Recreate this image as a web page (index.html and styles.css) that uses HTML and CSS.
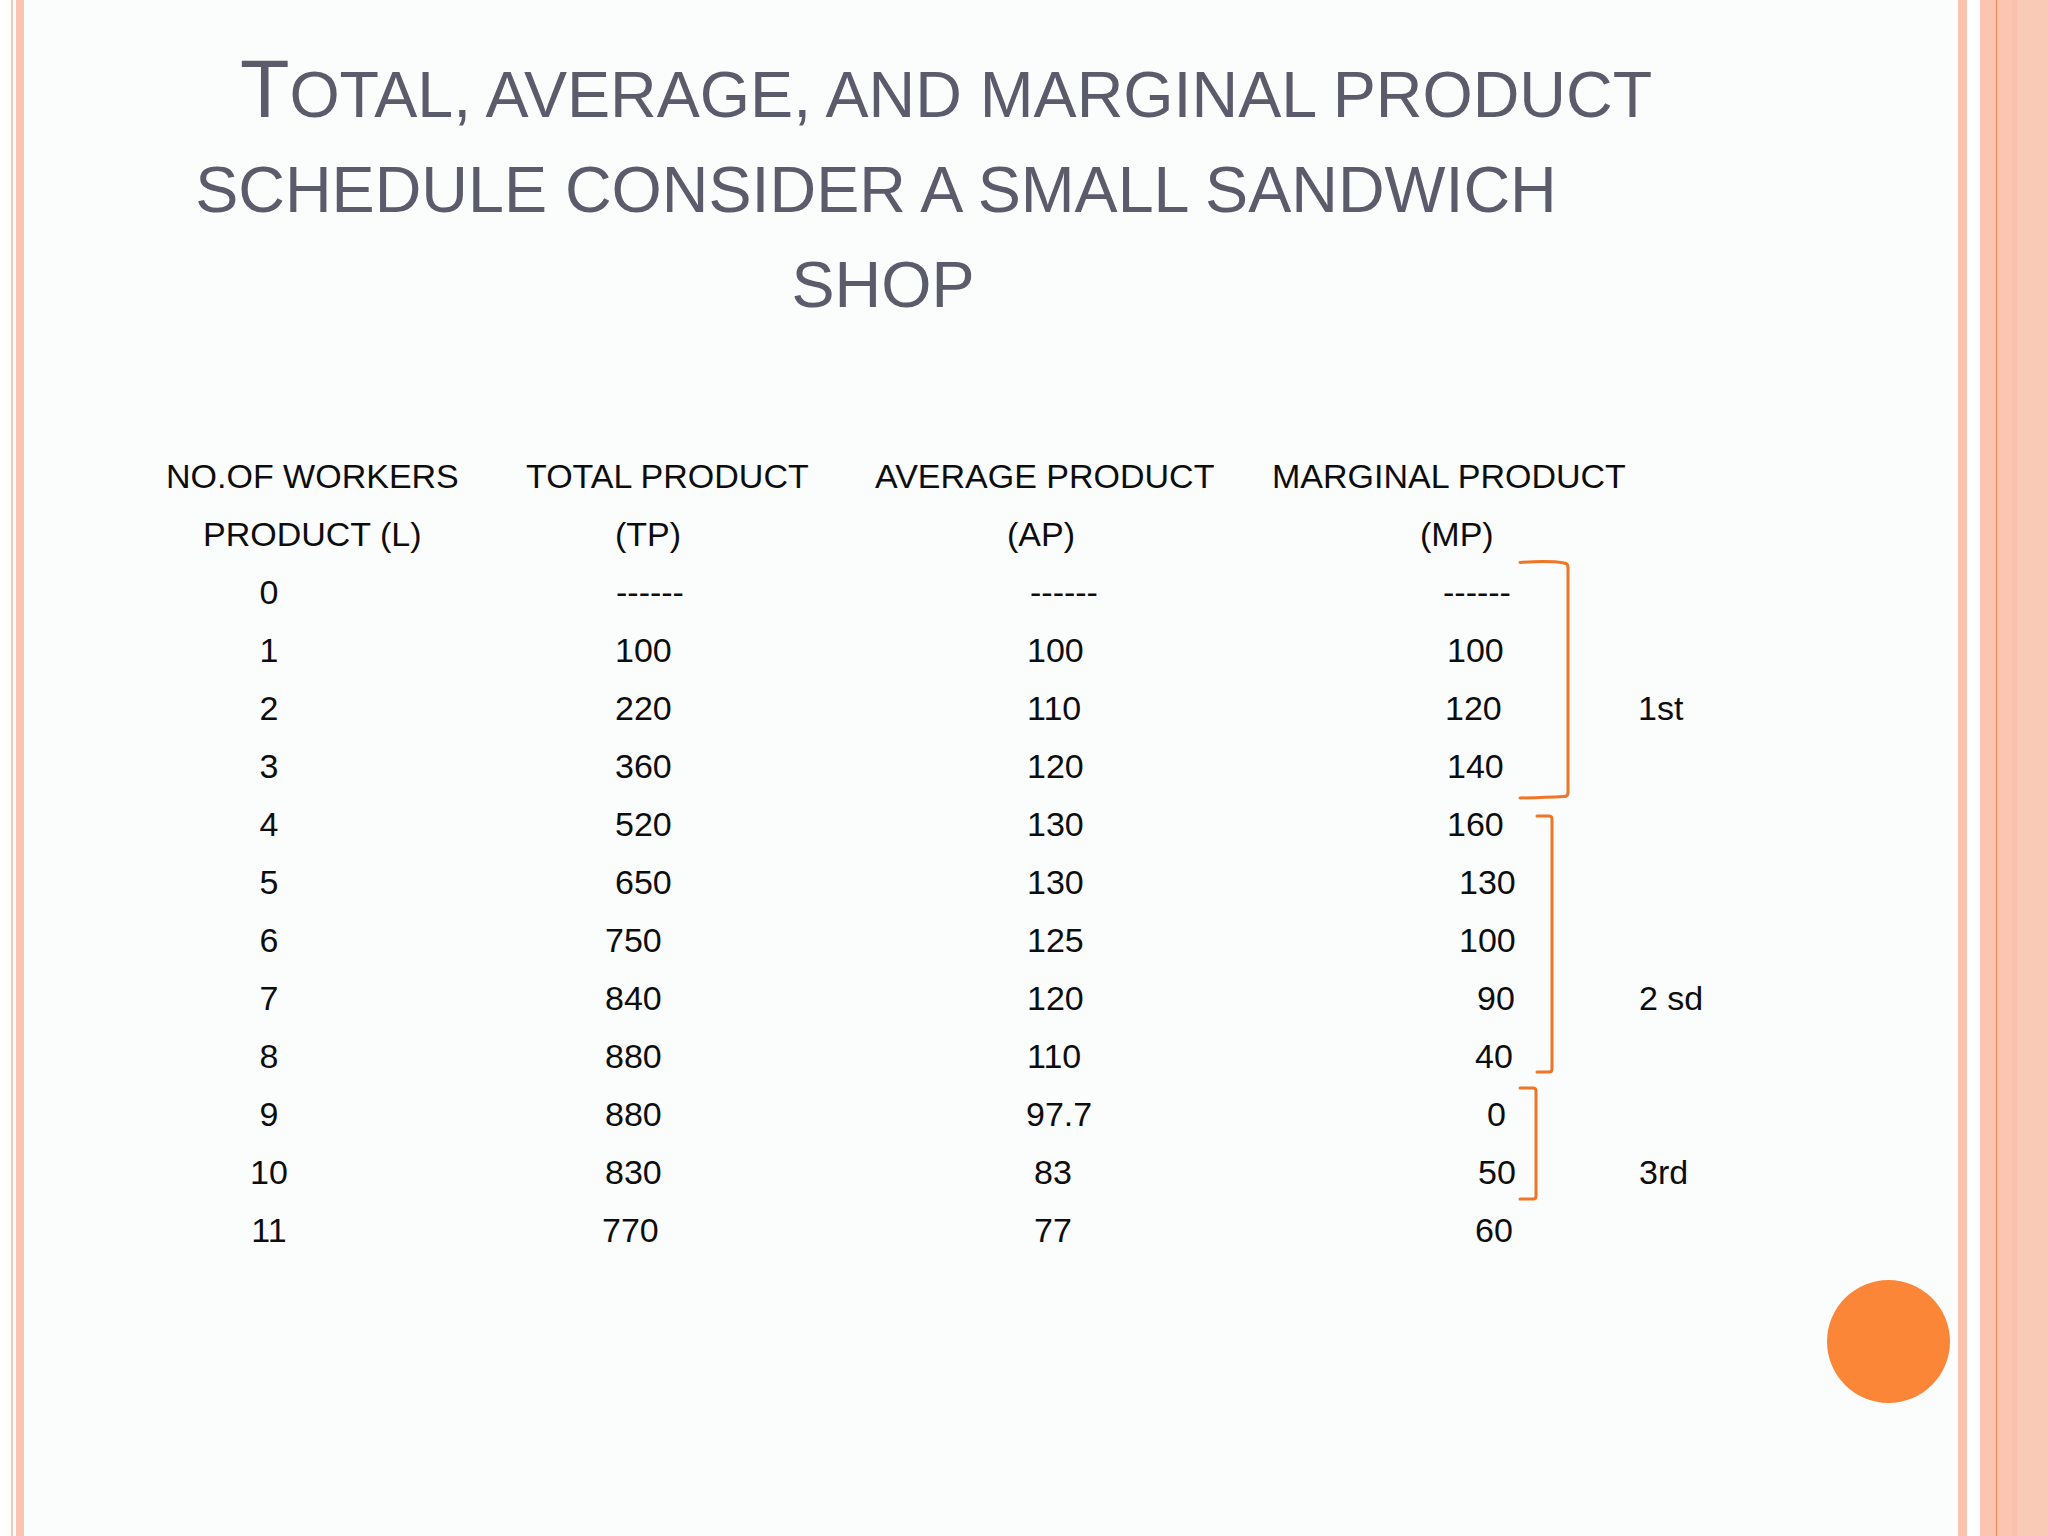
FILE: index.html
```html
<!DOCTYPE html>
<html lang="en">
<head>
<meta charset="utf-8">
<title>Total, average, and marginal product schedule</title>
<link rel="stylesheet" href="styles.css">
</head>
<body>
<div class="slide">
  <h1 class="title">
    <span class="line first"><span class="cap">T</span>OTAL, AVERAGE, AND MARGINAL PRODUCT</span>
    <span class="line">SCHEDULE CONSIDER A SMALL SANDWICH</span>
    <span class="line last">SHOP</span>
  </h1>

  <div class="table">
    <div>NO.OF WORKERS</div><div>TOTAL PRODUCT</div><div class="in-1">AVERAGE PRODUCT</div><div>MARGINAL PRODUCT</div><div></div>
    <div class="in-37">PRODUCT (L)</div><div class="in-89">(TP)</div><div class="in-133">(AP)</div><div class="in-148">(MP)</div><div></div>

    <div class="num">0</div><div class="in-90">------</div><div class="in-156">------</div><div class="in-171">------</div><div></div>
    <div class="num">1</div><div class="in-89">100</div><div class="in-153">100</div><div class="in-175">100</div><div></div>
    <div class="num">2</div><div class="in-89">220</div><div class="in-153">110</div><div class="in-173">120</div><div>1st</div>
    <div class="num">3</div><div class="in-89">360</div><div class="in-153">120</div><div class="in-175">140</div><div></div>
    <div class="num">4</div><div class="in-89">520</div><div class="in-153">130</div><div class="in-175">160</div><div></div>
    <div class="num">5</div><div class="in-89">650</div><div class="in-153">130</div><div class="in-187">130</div><div></div>
    <div class="num">6</div><div class="in-79">750</div><div class="in-153">125</div><div class="in-187">100</div><div></div>
    <div class="num">7</div><div class="in-79">840</div><div class="in-153">120</div><div class="in-205">90</div><div class="in-1">2 sd</div>
    <div class="num">8</div><div class="in-79">880</div><div class="in-153">110</div><div class="in-203">40</div><div></div>
    <div class="num">9</div><div class="in-79">880</div><div class="in-152">97.7</div><div class="in-215">0</div><div></div>
    <div class="num">10</div><div class="in-79">830</div><div class="in-160">83</div><div class="in-206">50</div><div class="in-1">3rd</div>
    <div class="num">11</div><div class="in-76">770</div><div class="in-160">77</div><div class="in-203">60</div><div></div>
  </div>

  <svg class="brackets" width="2048" height="1536" viewBox="0 0 2048 1536" aria-hidden="true">
    <path d="M1520 562.5 Q1548 560.5 1564 563 Q1568 563.5 1568 567 L1568 792 Q1568 796.5 1564 796.5 Q1545 797.5 1520 798" />
    <path d="M1537 816 L1549 816 Q1552 816 1552 819 L1552 1069 Q1552 1072 1549 1072 L1537 1072" />
    <path d="M1520 1088 L1533 1088 Q1536 1088 1536 1091 L1536 1196 Q1536 1199 1533 1199 L1520 1199" />
  </svg>

  <div class="dot"></div>
</div>
</body>
</html>
```

FILE: styles.css
```css
html, body {
  margin: 0;
  padding: 0;
}

body {
  width: 2048px;
  height: 1536px;
  overflow: hidden;
  background: #ffffff;
}

.slide {
  position: relative;
  width: 2048px;
  height: 1536px;
  display: flex;
  flex-direction: column;
  font-family: "Liberation Sans", Arial, sans-serif;
  background:
    linear-gradient(to right,
      #ffffff 0px, #ffffff 10.7px,
      #f9c8b6 10.7px, #f9c8b6 13.3px,
      #ffffff 13.3px, #ffffff 15.7px,
      #f9c4b1 15.7px, #f9c4b1 24px,
      #fbfcfc 24px, #fbfcfc 1958px,
      #fbc4b1 1958px, #fbc4b1 1967px,
      #ffffff 1967px, #ffffff 1980px,
      #fbc5b1 1980px, #fbc5b1 1995.6px,
      #ee8a52 1995.6px, #ee8a52 1997.4px,
      #fac6b2 1997.4px, #fac6b2 2011.7px,
      #f8c2ae 2011.7px, #f8c2ae 2016.7px,
      #f9cab6 2016.7px, #f9cab6 2048px);
}

.title {
  margin: 48px 0 0 76px;
  width: 1600px;
  text-align: center;
  font-family: "Liberation Sans", Arial, sans-serif;
  font-weight: 400;
  font-size: 64.6px;
  line-height: 95px;
  color: #5a5c6b;
}

.line {
  display: block;
  white-space: nowrap;
}

.first {
  padding-left: 140px;
}

.last {
  padding-left: 14px;
}

.cap {
  font-size: 81px;
  line-height: 1;
}

.table {
  margin: 114px 0 0 166px;
  display: grid;
  grid-template-columns: 360px 348px 398px 366px 200px;
  grid-auto-rows: 58px;
  font-size: 34px;
  line-height: 58px;
  color: #0d0d0d;
  white-space: nowrap;
}

.num {
  width: 206px;
  text-align: center;
}

.in-1 { padding-left: 1px; }
.in-37 { padding-left: 37px; }
.in-76 { padding-left: 76px; }
.in-79 { padding-left: 79px; }
.in-89 { padding-left: 89px; }
.in-90 { padding-left: 90px; }
.in-133 { padding-left: 133px; }
.in-148 { padding-left: 148px; }
.in-152 { padding-left: 152px; }
.in-153 { padding-left: 153px; }
.in-156 { padding-left: 156px; }
.in-160 { padding-left: 160px; }
.in-171 { padding-left: 171px; }
.in-173 { padding-left: 173px; }
.in-175 { padding-left: 175px; }
.in-187 { padding-left: 187px; }
.in-203 { padding-left: 203px; }
.in-205 { padding-left: 205px; }
.in-206 { padding-left: 206px; }
.in-215 { padding-left: 215px; }

.brackets {
  position: absolute;
  left: 0;
  top: 0;
  pointer-events: none;
}

.brackets path {
  fill: none;
  stroke: #f07524;
  stroke-width: 3;
  stroke-linecap: round;
  stroke-linejoin: round;
}

.dot {
  position: absolute;
  left: 1827px;
  top: 1280px;
  width: 123px;
  height: 123px;
  border-radius: 50%;
  background: #fc8637;
}
```
